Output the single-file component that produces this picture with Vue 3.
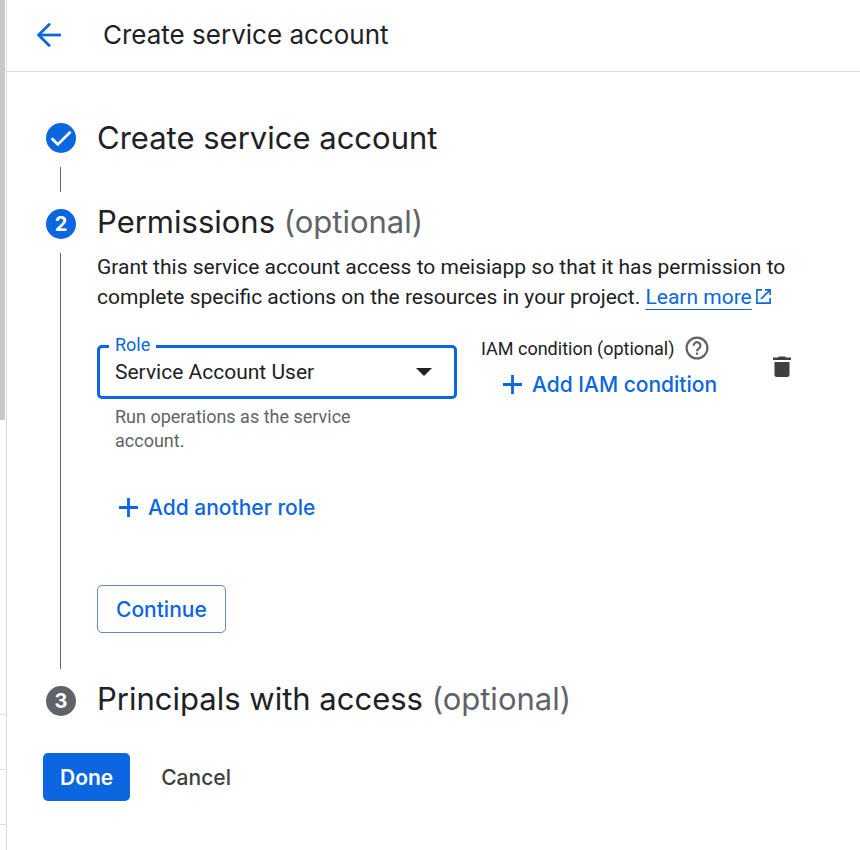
<script setup>
import { ref } from 'vue'

const role = ref('Service Account User')
const roles = ['Service Account User']
</script>

<template>
  <div class="page">
    <div class="rail" aria-hidden="true">
      <div class="thumb"></div>
      <div class="rows"><i></i><i></i><i></i></div>
    </div>

    <div class="panel">
      <header class="topbar">
        <button class="icon-button" type="button" aria-label="Back">
          <svg width="26" height="26" viewBox="0 0 26 26" fill="none" stroke="currentColor" stroke-width="2.8">
            <path d="M25 13H3" />
            <path d="M13.2 2.4 2.6 13l10.6 10.6" stroke-linecap="round" stroke-linejoin="miter" />
          </svg>
        </button>
        <h1>Create service account</h1>
      </header>

      <main>
        <ol class="steps">
          <li class="step">
            <div class="track">
              <span class="marker">
                <svg width="30" height="30" viewBox="0 0 30 30" fill="none" stroke="#fff" stroke-width="2.8">
                  <path d="M5.600 15.200l6.200 6.200L24.600 8.800" />
                </svg>
              </span>
              <span class="line"></span>
            </div>
            <div class="body short">
              <h2>Create service account</h2>
            </div>
          </li>

          <li class="step">
            <div class="track">
              <span class="marker">2</span>
              <span class="line"></span>
            </div>
            <div class="body">
              <h2>Permissions <span>(optional)</span></h2>
              <p class="intro">
                Grant this service account access to meisiapp so that it has permission to complete specific actions on
                the resources in your project.
                <a href="#learn">Learn more</a><svg class="external" width="17" height="17" viewBox="0 0 17 17" fill="none" stroke="currentColor" stroke-width="1.6">
                  <path d="M7 1.900H1.900v13.200h13.200V10M10 1.900h5.100V7M15 2 6 11" />
                </svg>
              </p>

              <div class="role-row">
                <div class="role">
                  <div class="field">
                    <label for="role">Role</label>
                    <select id="role" v-model="role">
                      <option v-for="r in roles" :key="r">{{ r }}</option>
                    </select>
                    <svg class="caret" width="16" height="8" viewBox="0 0 16 8"><path d="M0 0h16L8 8z" fill="#202124" /></svg>
                  </div>
                  <p class="hint">Run operations as the service account.</p>
                </div>
                <div class="condition">
                  <div class="condition-label">
                    <span>IAM condition (optional)</span>
                    <button class="icon-button help" type="button" aria-label="Help">
                      <svg width="24" height="24" viewBox="0 0 24 24" fill="none" stroke="currentColor" stroke-width="2.2">
                        <circle cx="12" cy="12" r="10.4" />
                        <path d="M8.600 9.700a3.400 3.400 0 1 1 5.700 2.400c-1.200 1-2.300 1.500-2.300 3.100" />
                        <path d="M12 16.500v2.300" />
                      </svg>
                    </button>
                  </div>
                  <button class="text-button" type="button">
                    <svg width="19" height="19" viewBox="0 0 19 19" stroke="currentColor" stroke-width="2.8"><path d="M9.500 0v19M0 9.500h19" /></svg>
                    Add IAM condition
                  </button>
                </div>
                <button class="icon-button trash" type="button" aria-label="Delete role">
                  <svg width="20" height="22" viewBox="0 0 20 22" fill="currentColor">
                    <path d="M1 1.500h5L7 .5h6l1 1h5V4H1zM2.500 6h15v12.500q0 2.500-2.500 2.500H5q-2.500 0-2.500-2.500z" />
                  </svg>
                </button>
              </div>

              <button class="text-button add-role" type="button">
                <svg width="19" height="19" viewBox="0 0 19 19" stroke="currentColor" stroke-width="2.8"><path d="M9.500 0v19M0 9.500h19" /></svg>
                Add another role
              </button>
              <button class="button outlined" type="button">Continue</button>
            </div>
          </li>

          <li class="step">
            <div class="track">
              <span class="marker pending">3</span>
            </div>
            <div class="body last">
              <h2>Principals with access <span>(optional)</span></h2>
            </div>
          </li>
        </ol>

        <div class="actions">
          <button class="button filled" type="button">Done</button>
          <button class="button plain" type="button">Cancel</button>
        </div>
      </main>
    </div>
  </div>
</template>

<style>
body {
  margin: 0;
  background: #fff;
}
</style>

<style scoped>
* {
  box-sizing: border-box;
}
.page {
  --blue: #0b66e0;
  --display: "Inter", "Roboto", sans-serif;
  display: flex;
  min-height: 100vh;
  color: #202124;
  font-family: "Roboto", sans-serif;
  font-size: 21px;
}
h1,
h2,
p,
ol {
  margin: 0;
  padding: 0;
}
button {
  font-family: var(--display);
  cursor: pointer;
}
svg {
  display: block;
  flex: none;
}
.rail {
  display: flex;
  flex-direction: column;
  flex: none;
  width: 7px;
  border-right: 1px solid #dadce0;
}
.thumb {
  width: 5px;
  height: 420px;
  background: #c8c8c8;
}
.rows {
  display: grid;
  grid-auto-rows: 55px;
  padding-top: 240px;
}
.rows i {
  border-bottom: 1px solid #dadce0;
}
.panel {
  flex: 1;
  min-width: 0;
}
.topbar {
  display: flex;
  align-items: center;
  gap: 41px;
  height: 72px;
  padding: 0 29px 2px;
  border-bottom: 1px solid #dadce0;
}
.icon-button {
  display: inline-flex;
  padding: 0;
  border: 0;
  background: none;
  color: var(--blue);
}
h1 {
  font: 400 26px/32px var(--display);
}
main {
  padding: 51px 36px 48px;
}
.steps {
  list-style: none;
  padding-left: 3px;
}
.step {
  display: flex;
  gap: 21px;
}
.track {
  display: flex;
  flex-direction: column;
  flex: none;
  width: 30px;
}
.marker {
  display: grid;
  place-items: center;
  width: 30px;
  height: 30px;
  border-radius: 50%;
  background: var(--blue);
  color: #fff;
  font: 700 20px/30px var(--display);
}
.pending {
  background: #5f6368;
}
.line {
  flex: 1;
  width: 1px;
  margin: 14px 0 17px 14px;
  background: #5f6368;
}
.body {
  flex: 1;
  min-width: 0;
  padding-bottom: 53px;
}
.short {
  padding-bottom: 56px;
}
.last {
  padding-bottom: 41px;
}
h2 {
  font: 400 31px/26px var(--display);
}
.short h2 {
  line-height: 30px;
}
h2 span {
  color: #5f6368;
}
.intro {
  max-width: 700px;
  margin-top: 17px;
  line-height: 30px;
}
a {
  color: var(--blue);
  text-decoration: underline;
  text-decoration-thickness: 1px;
  text-underline-offset: 5px;
}
.external {
  display: inline-block;
  margin-left: 3px;
  vertical-align: -1px;
  color: var(--blue);
}
.role-row {
  display: flex;
  align-items: flex-start;
  margin-top: 33px;
}
.role {
  flex: 0 1 360px;
}
.field {
  position: relative;
}
.field label {
  position: absolute;
  top: -10px;
  left: 12px;
  padding: 0 6px;
  background: #fff;
  color: var(--blue);
  font-size: 18px;
  line-height: 20px;
}
select {
  display: block;
  width: 100%;
  height: 54px;
  padding: 0 48px 0 15px;
  border: 3px solid var(--blue);
  border-radius: 5px;
  outline: 0;
  background: #fff;
  color: inherit;
  font: 400 21px/30px "Roboto", sans-serif;
  appearance: none;
}
.caret {
  position: absolute;
  top: 23px;
  right: 25px;
  pointer-events: none;
}
.hint {
  max-width: 300px;
  padding: 6px 18px 0;
  color: #5f6368;
  font-size: 18px;
  line-height: 24px;
}
.condition {
  margin-left: 24px;
}
.condition-label {
  display: flex;
  align-items: center;
  gap: 10px;
  height: 24px;
  margin-top: -9px;
  font-size: 18px;
}
.help {
  color: #5f6368;
}
.trash {
  margin: 11px 0 0 33px;
  color: #3c4043;
}
.text-button {
  display: flex;
  align-items: center;
  gap: 10px;
  height: 48px;
  padding: 0 22px;
  border: 0;
  background: none;
  color: var(--blue);
  font-size: 21px;
  font-weight: 500;
}
.add-role {
  margin-top: 30px;
}
.button {
  display: block;
  height: 48px;
  padding: 0 18px;
  border: 1px solid transparent;
  border-radius: 5px;
  background: none;
  font-size: 21px;
  font-weight: 500;
}
.outlined {
  margin-top: 54px;
  border-color: #6484cc;
  color: var(--blue);
}
.filled {
  padding: 0 16px;
  background: var(--blue);
  color: #fff;
  font-weight: 600;
}
.plain {
  color: #3c4043;
}
.actions {
  display: flex;
  gap: 12px;
}
</style>
